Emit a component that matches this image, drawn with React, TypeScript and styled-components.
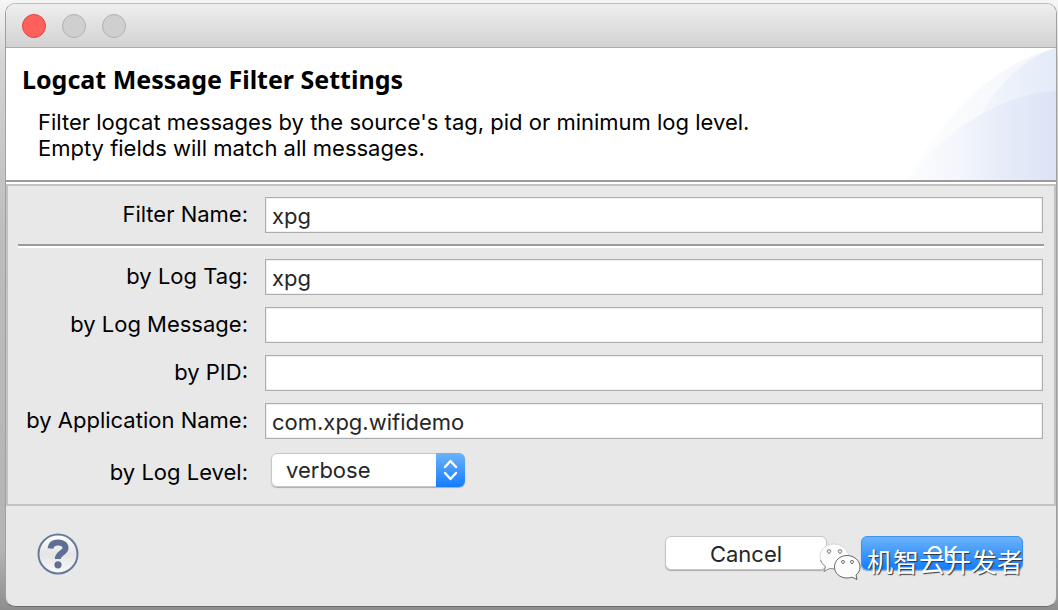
import React from "react";
import styled, { createGlobalStyle } from "styled-components";

const GlobalStyle = createGlobalStyle`
  *, *::before, *::after { box-sizing: border-box; }
  body {
    margin: 0;
    font-family: Inter, "Liberation Sans", sans-serif;
    font-size: 22px;
    line-height: 26px;
    color: #000;
  }
`;

const Desktop = styled.div`
  display: flex;
  min-height: 100vh;
  padding: 3px 1px 3px 5px;
  background: linear-gradient(#f6f6f6, #d4d4d4 10%, #bcbcbc 40%, #b4b4b4 90%, #8e8e8e);
`;

const Dialog = styled.main`
  flex: 1;
  display: flex;
  flex-direction: column;
  min-width: 0;
  border: 1px solid #a0a0a0;
  border-top-color: #bdbdbd;
  border-bottom-color: #6c6c6c;
  border-radius: 10px;
  overflow: hidden;
  background: #e8e8e8;
`;

const TitleBar = styled.div`
  display: flex;
  align-items: center;
  gap: 16px;
  height: 44px;
  padding: 0 16px;
  background: linear-gradient(#efefef, #d2d2d2);
  border-bottom: 1px solid #ababab;
`;

const WindowButton = styled.button<{ $active?: boolean }>`
  width: 24px;
  height: 24px;
  padding: 0;
  border-radius: 50%;
  border: 1px solid ${(p) => (p.$active ? "#e2463f" : "#b2b2b2")};
  background: ${(p) => (p.$active ? "#fe605b" : "#cfcfcf")};
`;

const Header = styled.header`
  position: relative;
  padding: 18px 16px 19px;
  background: #fff;
  border-bottom: 2px solid #9b9b9b;
`;

const Title = styled.h1`
  margin: 0 0 17px;
  font-family: "Noto Sans", "Open Sans", sans-serif;
  font-size: 25px;
  line-height: 26px;
  font-weight: 700;
`;

const Description = styled.p`
  margin: 0 0 0 16px;
`;

const Banner = styled.svg`
  position: absolute;
  right: 0;
  bottom: 0;
  width: 150px;
  height: 132px;
`;

const Panel = styled.form`
  margin-top: 2px;
  border: 2px solid #c2c2c2;
  padding: 11px 10px 17px;
  box-shadow: 0 -2px #fff;
`;

const Row = styled.div`
  display: grid;
  grid-template-columns: 230px 1fr;
  column-gap: 17px;
  padding-right: 1px;
  margin-bottom: 12px;
`;

const Label = styled.label`
  padding-top: 4px;
  text-align: right;
  white-space: nowrap;
`;

const TextField = styled.input`
  width: 100%;
  height: 36px;
  min-width: 0;
  padding: 2px 6px 0;
  border: 1px solid #adadad;
  border-radius: 0;
  background: #fff;
  box-shadow: inset 0 0 0 1px #f0f0f0;
  color: #262626;
  font: inherit;
  outline: none;
`;

const Separator = styled.hr`
  height: 4px;
  margin: -1px 0 11px;
  border: 0;
  border-top: 2px solid #9b9b9b;
  background: #fff;
`;

const LevelRow = styled(Row)`
  margin: 14px 0 0;
`;

const LevelLabel = styled(Label)`
  padding-top: 6px;
`;

const SelectBox = styled.div`
  position: relative;
  width: 194px;
  height: 34px;
  margin-left: 6px;
  border-radius: 6px;
  overflow: hidden;
  box-shadow: 0 1px 1px #aaa;
`;

const Select = styled.select`
  appearance: none;
  width: 100%;
  height: 100%;
  padding: 0 40px 0 14px;
  border: 1px solid #c6c6c6;
  border-radius: 6px;
  background: #fff;
  color: #262626;
  font: inherit;
  outline: none;
`;

const Stepper = styled.svg`
  position: absolute;
  top: 0;
  right: 0;
  width: 29px;
  height: 34px;
  pointer-events: none;
`;

const Footer = styled.footer`
  position: relative;
  flex: 1;
  display: flex;
  align-items: flex-start;
  justify-content: space-between;
  padding: 26px 33px 28px 30px;
`;

const HelpButton = styled.button`
  width: 44px;
  height: 44px;
  padding: 0;
  border: 0;
  background: none;

  svg { display: block; }
`;

const Actions = styled.div`
  display: flex;
  gap: 34px;
  padding-top: 4px;
`;

const ActionButton = styled.button<{ $primary?: boolean }>`
  width: 162px;
  height: 34px;
  padding: 2px 0 0;
  border: 1px solid ${(p) => (p.$primary ? "#3f93ee" : "#c6c6c6")};
  border-radius: 6px;
  background: ${(p) => (p.$primary ? "linear-gradient(#6cb3fa, #147cff)" : "#fff")};
  box-shadow: 0 1px 1px ${(p) => (p.$primary ? "#7ba9e6" : "#aaa")};
  color: ${(p) => (p.$primary ? "#fff" : "#262626")};
  font: inherit;
`;

const Watermark = styled.div`
  position: absolute;
  top: 35px;
  right: 33px;
  display: flex;
  align-items: center;
  gap: 6px;
  pointer-events: none;
  color: #fff;
  font-family: "Noto Sans CJK SC", sans-serif;
  font-size: 26px;
  line-height: 40px;
  text-shadow: 1px 1px 1px #333;
  white-space: nowrap;
`;

const fields = [
  { id: "tag", label: "by Log Tag:", value: "xpg" },
  { id: "message", label: "by Log Message:", value: "" },
  { id: "pid", label: "by PID:", value: "" },
  { id: "app", label: "by Application Name:", value: "com.xpg.wifidemo" },
];

export default function App() {
  return (
    <>
      <GlobalStyle />
      <Desktop>
        <Dialog>
          <TitleBar>
            <WindowButton type="button" $active aria-label="Close" />
            <WindowButton type="button" aria-label="Minimize" disabled />
            <WindowButton type="button" aria-label="Zoom" disabled />
          </TitleBar>
          <Header>
            <Banner viewBox="0 0 150 132" aria-hidden="true">
              <defs>
                <linearGradient id="pale" x1="0" x2="150" y1="0" y2="0" gradientUnits="userSpaceOnUse">
                  <stop offset="0" stopColor="#fefefe" />
                  <stop offset="1" stopColor="#f2f5fb" />
                </linearGradient>
                <linearGradient id="mid" x1="50" x2="150" y1="0" y2="0" gradientUnits="userSpaceOnUse">
                  <stop offset="0" stopColor="#f8fafd" />
                  <stop offset="1" stopColor="#e3ebf8" />
                </linearGradient>
                <linearGradient id="deep" x1="0" x2="150" y1="0" y2="0" gradientUnits="userSpaceOnUse">
                  <stop offset="0" stopColor="#fdfdfe" />
                  <stop offset="0.35" stopColor="#f3f6fc" />
                  <stop offset="0.65" stopColor="#e6ecf8" />
                  <stop offset="1" stopColor="#dce3f6" />
                </linearGradient>
              </defs>
              <path d="M0 132C30 84 76 18 150 0V132Z" fill="url(#pale)" />
              <path d="M48 132C58 88 94 16 150 0V132Z" fill="url(#mid)" />
              <path d="M0 132C30 94 82 48 150 43V132Z" fill="url(#deep)" />
            </Banner>
            <Title>Logcat Message Filter Settings</Title>
            <Description>
              Filter logcat messages by the source's tag, pid or minimum log level.
              <br />
              Empty fields will match all messages.
            </Description>
          </Header>
          <Panel>
            <Row>
              <Label htmlFor="name">Filter Name:</Label>
              <TextField id="name" type="text" defaultValue="xpg" />
            </Row>
            <Separator />
            {fields.map((f) => (
              <Row key={f.id}>
                <Label htmlFor={f.id}>{f.label}</Label>
                <TextField id={f.id} type="text" defaultValue={f.value} />
              </Row>
            ))}
            <LevelRow>
              <LevelLabel htmlFor="level">by Log Level:</LevelLabel>
              <SelectBox>
                <Select id="level" defaultValue="verbose">
                  <option>verbose</option>
                  <option>debug</option>
                  <option>info</option>
                  <option>warn</option>
                  <option>error</option>
                  <option>assert</option>
                </Select>
                <Stepper viewBox="0 0 29 34" aria-hidden="true">
                  <defs>
                    <linearGradient id="blue" x1="0" x2="0" y1="0" y2="1">
                      <stop offset="0" stopColor="#6cb3fa" />
                      <stop offset="1" stopColor="#147cff" />
                    </linearGradient>
                  </defs>
                  <rect width="29" height="34" fill="url(#blue)" />
                  <path
                    d="M9 14L14.500 8L20 14M9 20L14.500 26L20 20"
                    fill="none"
                    stroke="#fff"
                    strokeWidth="2.400"
                    strokeLinecap="round"
                    strokeLinejoin="round"
                  />
                </Stepper>
              </SelectBox>
            </LevelRow>
          </Panel>
          <Footer>
            <HelpButton type="button" aria-label="Help">
              <svg width="44" height="44" viewBox="0 0 44 44" aria-hidden="true">
                <defs>
                  <linearGradient id="glass" x1="0" x2="0" y1="0" y2="1">
                    <stop offset="0" stopColor="#fff" />
                    <stop offset="0.5" stopColor="#e4e4e4" />
                    <stop offset="1" stopColor="#fafafa" />
                  </linearGradient>
                </defs>
                <circle cx="22" cy="22" r="19.500" fill="url(#glass)" stroke="#667a9b" strokeWidth="2" />
                <path
                  d="M14.500 16.500C15 12 18 10.500 22 10.500C26.500 10.500 29.500 12.500 29.500 16C29.500 21 21.800 20.500 21.800 27"
                  fill="none"
                  stroke="#5d7094"
                  strokeWidth="6"
                />
                <circle cx="22" cy="32.800" r="3.600" fill="#5d7094" />
              </svg>
            </HelpButton>
            <Actions>
              <ActionButton type="button">Cancel</ActionButton>
              <ActionButton type="button" $primary>OK</ActionButton>
            </Actions>
            <Watermark>
              <svg width="42" height="38" viewBox="0 0 42 38" aria-hidden="true">
                <path
                  d="M15 2C7 2 1 7.500 1 14.500C1 18.500 3 22 6.500 24.500L5 29.500L10.500 26.500C12 27 13.500 27 16 27C24 27 29.500 21.500 29.500 14.500C29.500 7.500 23 2 15 2Z"
                  fill="#fcfcfc"
                  stroke="#d0d0d0"
                  strokeWidth="0.800"
                />
                <path d="M1.500 18C2.500 21 4 23 6.500 24.500L5 29.500L10.500 26.500L15 27" fill="none" stroke="#777" strokeWidth="0.800" />
                <path
                  d="M28 13.500C21 13.500 15.500 18.500 15.500 25C15.500 31.500 21 36 28 36C30 36 31.500 35.800 33 35.200L38 37.500L37 33C39.500 31 41 28.500 41 25C41 18.500 35 13.500 28 13.500Z"
                  fill="#fcfcfc"
                  stroke="#555"
                  strokeWidth="0.900"
                />
                <g fill="#eee" stroke="#666" strokeWidth="0.900">
                  <path d="M8.200 9.500A1.800 1.800 0 0 1 11.800 9.500L10 11.800ZM19.200 9.500A1.800 1.800 0 0 1 22.800 9.500L21 11.800Z" />
                  <path d="M22.400 20A1.600 1.600 0 0 1 25.600 20L24 22ZM31.400 20A1.600 1.600 0 0 1 34.600 20L33 22Z" />
                </g>
              </svg>
              <span>机智云开发者</span>
            </Watermark>
          </Footer>
        </Dialog>
      </Desktop>
    </>
  );
}
